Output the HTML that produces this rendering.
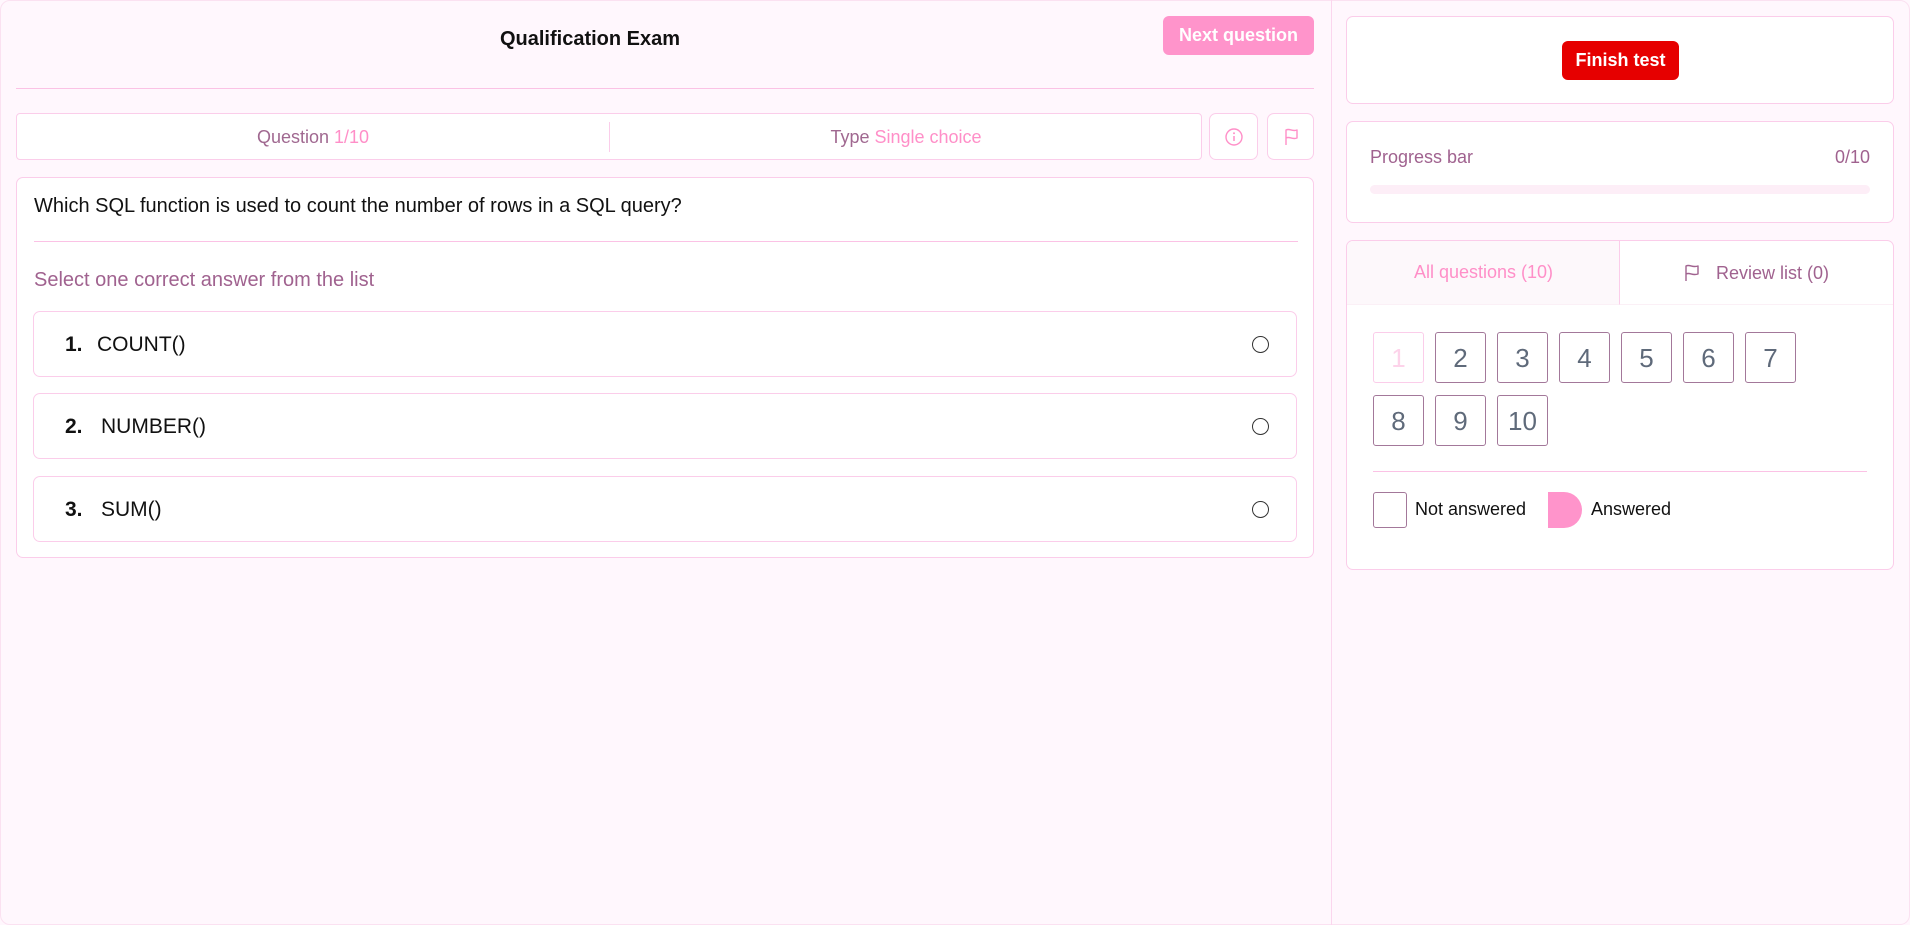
<!DOCTYPE html>
<html><head><meta charset="utf-8"><style>
*{box-sizing:border-box;margin:0;padding:0}
body{width:1910px;height:925px;background:#fff7fd;font-family:"Liberation Sans",sans-serif;position:relative;overflow:hidden}
.a{position:absolute}
.card{position:absolute;background:#fff;border:1px solid #fbcdea;border-radius:7px}
.vd{position:absolute;left:1331px;top:0;width:1px;height:925px;background:#fbd6ee}
.opt{position:absolute;left:33px;width:1264px;height:66px;background:#fff;border:1px solid #fbcdea;border-radius:7px}
.opt .n{position:absolute;left:31px;top:21px;font-size:21px;font-weight:bold;color:#111}
.opt .t{position:absolute;top:21px;font-size:21px;color:#111}
.opt .r{position:absolute;left:1218px;top:24px;width:17px;height:17px;border:1.3px solid #333;border-radius:50%}
.nb{position:absolute;width:51px;height:51px;border:1px solid #a3789a;border-radius:3px;background:#fff;font-size:26px;color:#5f6a7a;text-align:center;line-height:50px}
</style></head><body>
<div class="a" style="left:0;top:0;width:1910px;height:925px;border:1px solid #fbe1f1;border-radius:10px"></div>
<div class="vd"></div>
<div class="a" style="left:0;width:1180px;top:28px;text-align:center;font-size:20px;font-weight:bold;color:#111">Qualification Exam</div>
<div class="a" style="left:1163px;top:16px;width:151px;height:39px;background:#ff94cb;border-radius:6px;color:#fff;font-weight:bold;font-size:18px;text-align:center;line-height:39px">Next question</div>
<div class="a" style="left:16px;top:88px;width:1298px;height:1px;background:#fbc2e5"></div>
<div class="card" style="left:16px;top:113px;width:1186px;height:47px;border-radius:4px">
<div class="a" style="left:592px;top:8px;width:1px;height:30px;background:#fbcdea"></div>
<div class="a" style="left:0;width:592px;top:13px;text-align:center;font-size:18px;color:#a06890">Question <span style="color:#ff8fc8">1/10</span></div>
<div class="a" style="left:593px;width:592px;top:13px;text-align:center;font-size:18px;color:#a06890">Type <span style="color:#ff8fc8">Single choice</span></div>
</div>
<div class="card" style="left:1209px;top:113px;width:49px;height:47px">
<svg class="a" style="left:14px;top:13px" width="20" height="20" viewBox="0 0 20 20"><circle cx="10" cy="10" r="8" fill="none" stroke="#ff8fc8" stroke-width="1.4"/><line x1="10" y1="9" x2="10" y2="14" stroke="#ff8fc8" stroke-width="1.5"/><circle cx="10" cy="6.3" r="1" fill="#ff8fc8"/></svg></div>
<div class="card" style="left:1267px;top:113px;width:47px;height:47px">
<svg class="a" style="left:14px;top:13px" width="20" height="20" viewBox="0 0 20 20"><path d="M4 18V3c4-2 6 2 11 0v8c-5 2-7-2-11 0" fill="none" stroke="#ff8fc8" stroke-width="1.4" stroke-linejoin="round"/></svg></div>
<div class="card" style="left:16px;top:177px;width:1298px;height:381px">
<div class="a" style="left:17px;top:17px;font-size:20px;color:#111">Which SQL function is used to count the number of rows in a SQL query?</div>
<div class="a" style="left:17px;top:63px;width:1264px;height:1px;background:#fbc2e5"></div>
<div class="a" style="left:17px;top:91px;font-size:20px;color:#a0628f">Select one correct answer from the list</div>
</div>
<div class="opt" style="top:311px"><span class="n">1.</span><span class="t" style="left:63px">COUNT()</span><span class="r"></span></div>
<div class="opt" style="top:393px"><span class="n">2.</span><span class="t" style="left:67px">NUMBER()</span><span class="r"></span></div>
<div class="opt" style="top:476px"><span class="n">3.</span><span class="t" style="left:67px">SUM()</span><span class="r"></span></div>

<div class="card" style="left:1346px;top:16px;width:548px;height:88px">
<div class="a" style="left:215px;top:24px;width:117px;height:39px;background:#e60000;border-radius:6px;color:#fff;font-weight:bold;font-size:18px;text-align:center;line-height:39px">Finish test</div></div>
<div class="card" style="left:1346px;top:121px;width:548px;height:102px">
<div class="a" style="left:23px;top:25px;font-size:18px;color:#a0628f">Progress bar</div>
<div class="a" style="right:23px;top:25px;font-size:18px;color:#a0628f">0/10</div>
<div class="a" style="left:23px;top:63px;width:500px;height:9px;background:#fdeef7;border-radius:5px"></div></div>
<div class="card" style="left:1346px;top:240px;width:548px;height:330px;overflow:hidden">
<div class="a" style="left:0;top:0;width:273px;height:64px;background:#fdf8fb;border-right:1px solid #fbcdea;border-bottom:1px solid #fbf0f6"></div>
<div class="a" style="left:273px;top:0;width:275px;height:64px;border-bottom:1px solid #fbf0f6"></div>
<div class="a" style="left:0;width:273px;top:21px;text-align:center;font-size:18px;color:#ff8fc8">All questions (10)</div>
<svg class="a" style="left:336px;top:22px" width="20" height="20" viewBox="0 0 20 20"><path d="M3 18V3c4-2 6 2 12 0v8c-6 2-8-2-12 0" fill="none" stroke="#a0628f" stroke-width="1.4" stroke-linejoin="round"/></svg>
<div class="a" style="left:369px;top:22px;font-size:18px;color:#a0628f">Review list (0)</div>
</div>
<div class="nb" style="left:1373px;top:332px;border-color:#fbcdea;color:#fdd3ea">1</div>
<div class="nb" style="left:1435px;top:332px">2</div>
<div class="nb" style="left:1497px;top:332px">3</div>
<div class="nb" style="left:1559px;top:332px">4</div>
<div class="nb" style="left:1621px;top:332px">5</div>
<div class="nb" style="left:1683px;top:332px">6</div>
<div class="nb" style="left:1745px;top:332px">7</div>
<div class="nb" style="left:1373px;top:395px">8</div>
<div class="nb" style="left:1435px;top:395px">9</div>
<div class="nb" style="left:1497px;top:395px">10</div>
<div class="a" style="left:1373px;top:471px;width:494px;height:1px;background:#fbc2e5"></div>
<div class="a" style="left:1373px;top:492px;width:34px;height:36px;border:1px solid #a3789a;border-radius:3px"></div>
<div class="a" style="left:1415px;top:499px;font-size:18px;color:#111">Not answered</div>
<div class="a" style="left:1548px;top:492px;width:34px;height:36px;background:#ff94cb;border-radius:0 18px 18px 0"></div>
<div class="a" style="left:1591px;top:499px;font-size:18px;color:#111">Answered</div>
</body></html>
